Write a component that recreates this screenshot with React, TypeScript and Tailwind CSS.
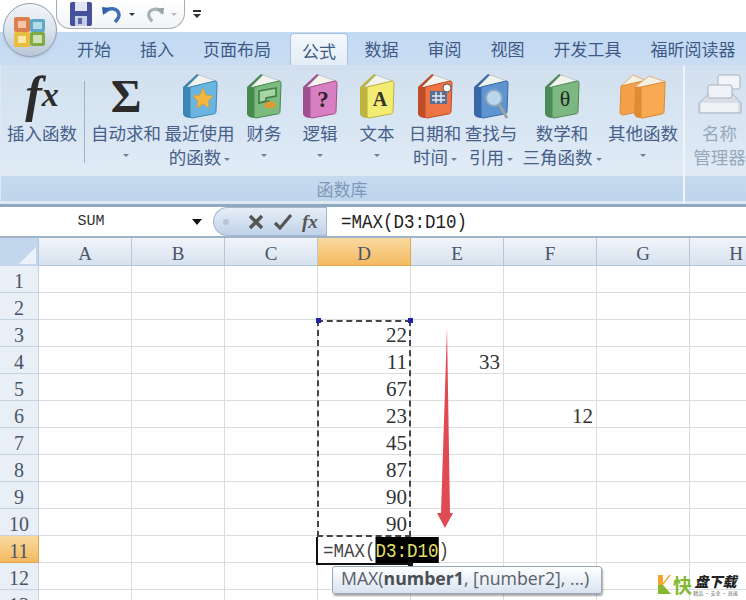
const cjk = '"Noto Sans CJK SC", "Noto Sans", sans-serif';
const serif = '"Liberation Serif", "Noto Serif CJK SC", serif';
const mono = '"Liberation Mono", monospace';

const tabs = ['开始', '插入', '页面布局', '公式', '数据', '审阅', '视图', '开发工具', '福昕阅读器'];
const cols = ['A', 'B', 'C', 'D', 'E', 'F', 'G', 'H'];
const rows = [1, 2, 3, 4, 5, 6, 7, 8, 9, 10, 11, 12, 13];
const values: Record<string, string> = {
  D3: '22', D4: '11', D5: '67', D6: '23', D7: '45', D8: '87', D9: '90', D10: '90', E4: '33', F6: '12',
};

function Book({ cover, spine, children }: { cover: string; spine: string; children?: React.ReactNode }) {
  return (
    <svg width="36" height="46" viewBox="0 0 36 46">
      <path d="M1 14 L15 1 L19 3 L8 14 Z" fill={spine} />
      <path d="M5 14 L17 2 L34 8 L9 14 Z" fill="#f3f3ee" stroke="#aab2b8" strokeWidth="0.6" />
      <path d="M1 14 L8 14 L9 45 C5 45 2 44 1 41 Z" fill={spine} />
      <path d="M8 14 L33 8 C35 8 35 9 35 11 L34 38 C34 40 33 41 31 41 L10 45 C9 45 8 44 8 43 Z" fill={cover} stroke={spine} strokeWidth="1" />
      {children}
    </svg>
  );
}

const icons = {
  star: (
    <Book cover="#6ab4e0" spine="#3c86b4">
      <path d="M21 15 L24 22 L31 23 L26 28 L27 35 L21 31 L15 35 L16 28 L11 23 L18 22 Z" fill="#f4b63f" stroke="#d9a030" strokeWidth="0.8" />
    </Book>
  ),
  money: (
    <Book cover="#7cba7e" spine="#468a50">
      <path d="M13 18 L30 15 V23 L20 25 V28 L13 30 Z" fill="#a9d4a4" stroke="#3f7d49" strokeWidth="1.6" />
      <path d="M13 30 L24 28" stroke="#3f7d49" strokeWidth="1.6" />
      <ellipse cx="24" cy="32" rx="6" ry="3.5" fill="#dd9a33" />
    </Book>
  ),
  logic: (
    <Book cover="#d77fc0" spine="#a0508f">
      <text x="21" y="34" fontSize="23" fontWeight="700" textAnchor="middle" fill="#2c2430" fontFamily={serif}>?</text>
    </Book>
  ),
  text: (
    <Book cover="#f3ec72" spine="#bcb43f">
      <text x="21" y="33" fontSize="20" fontWeight="700" textAnchor="middle" fill="#33332a" fontFamily={serif}>A</text>
    </Book>
  ),
  date: (
    <Book cover="#ee7446" spine="#bd4c28">
      <rect x="13" y="18" width="17" height="13" fill="#5b6f95" />
      <path d="M15 23 H28 M15 27 H28 M19 19 V30 M24 19 V30" stroke="#e8ecf3" strokeWidth="1.4" />
      <circle cx="30" cy="15" r="4" fill="#fff" stroke="#555" />
    </Book>
  ),
  lookup: (
    <Book cover="#5e94d2" spine="#3768a8">
      <circle cx="21" cy="25" r="8" fill="#b9d6ee" stroke="#8fa7bd" strokeWidth="2" />
      <path d="M26 31 L34 45" stroke="#98a2a8" strokeWidth="3" />
    </Book>
  ),
  math: (
    <Book cover="#7db883" spine="#4b8b57">
      <text x="21" y="33" fontSize="22" textAnchor="middle" fill="#1f2d23" fontFamily={serif}>θ</text>
    </Book>
  ),
};

const buttons: { w: number; lines: string[]; icon: React.ReactNode; arrowOnLine?: boolean }[] = [
  { w: 70, lines: ['自动求和'], icon: <span className="text-[47px] leading-[46px] font-bold text-[#2b2b2b]" style={{ fontFamily: serif }}>Σ</span> },
  { w: 77, lines: ['最近使用', '的函数'], icon: icons.star, arrowOnLine: true },
  { w: 52, lines: ['财务'], icon: icons.money },
  { w: 60, lines: ['逻辑'], icon: icons.logic },
  { w: 54, lines: ['文本'], icon: icons.text },
  { w: 62, lines: ['日期和', '时间'], icon: icons.date, arrowOnLine: true },
  { w: 50, lines: ['查找与', '引用'], icon: icons.lookup, arrowOnLine: true },
  { w: 92, lines: ['数学和', '三角函数'], icon: icons.math, arrowOnLine: true },
  {
    w: 70,
    lines: ['其他函数'],
    icon: (
      <svg width="48" height="46" viewBox="0 0 48 46">
        <path d="M2 13 L14 2 L28 8 L14 13 Z" fill="#f3f0e4" stroke="#e0a060" strokeWidth="0.8" />
        <path d="M2 13 L24 8 L24 38 L4 42 C2 42 1 41 1 39 Z" fill="#f3a04a" stroke="#d98a3a" />
        <path d="M16 14 L30 3 L47 9 L30 14 Z" fill="#f3f0e4" stroke="#e0a060" strokeWidth="0.8" />
        <path d="M16 14 L22 14 L22 45 C18 45 16 44 15 41 Z" fill="#e08a34" />
        <path d="M22 14 L45 9 C46 9 46 10 46 11 L45 39 C45 40 44 41 43 41 L24 45 L22 45 Z" fill="#f9a951" stroke="#d98a3a" />
      </svg>
    ),
  },
];

function Caret({ className = '' }: { className?: string }) {
  return <span className={`inline-block w-0 h-0 border-x-[3px] border-x-transparent border-t-[3px] border-t-[#6a7f9c] ${className}`} />;
}

function RibbonButton({ w, lines, icon, arrowOnLine }: { w: number; lines: string[]; icon: React.ReactNode; arrowOnLine?: boolean }) {
  return (
    <div className="shrink-0 flex flex-col items-center" style={{ width: w }}>
      <div className="h-[46px] flex items-end justify-center">{icon}</div>
      <div className="mt-[2px] text-[17.5px] leading-[24px] text-[#46608a] text-center whitespace-nowrap">
        <div>{lines[0]}</div>
        {arrowOnLine ? (
          <div className="h-[24px]">
            {lines[1]}
            <Caret className="ml-[3px] align-middle" />
          </div>
        ) : (
          <div className="h-[20px] flex items-center justify-center"><Caret /></div>
        )}
      </div>
    </div>
  );
}

function GroupLabelBar({ label }: { label: string }) {
  return (
    <div className="h-[25px] mb-[3px] bg-gradient-to-b from-[#c6daef] to-[#bed5ec] text-[17px] leading-[25px] text-center text-[#7f97b8]">
      {label}
    </div>
  );
}

export default function App() {
  return (
    <div className="relative w-[746px] h-[600px] overflow-hidden bg-white" style={{ fontFamily: cjk }}>
      {/* quick access toolbar */}
      <div className="h-[32px] flex items-start pl-[56px]">
        <div className="w-[129px] h-[29px] border border-t-0 border-[#a5abb3] rounded-br-[16px] rounded-bl-[14px] flex items-center gap-[9px] pl-[13px] bg-gradient-to-b from-white to-[#f1f3f6]">
          <svg width="22" height="24" viewBox="0 0 22 24">
            <rect x="0" y="0" width="22" height="24" rx="2" fill="#46509c" />
            <rect x="5" y="0" width="12" height="9" fill="#dfe5f2" />
            <rect x="5" y="14" width="12" height="10" fill="#c5cfe4" />
            <rect x="8" y="16" width="4" height="6" fill="#5665a8" />
          </svg>
          <svg width="22" height="20" viewBox="0 0 22 20">
            <path d="M3 9 C7 3 17 3 18 11 C18 14 16 16 14 18" fill="none" stroke="#3f6fb5" strokeWidth="3.5" />
            <path d="M1 3 L9 4 L2 11 Z" fill="#2f5ea8" />
          </svg>
          <Caret className="-ml-[3px] !border-t-[#333]" />
          <svg className="ml-[1px]" width="20" height="20" viewBox="0 0 22 20">
            <path d="M19 9 C15 3 5 3 4 11 C4 14 6 16 8 18" fill="none" stroke="#a7b1b6" strokeWidth="3.5" />
            <path d="M21 3 L13 4 L20 11 Z" fill="#99a5aa" />
          </svg>
          <Caret className="-ml-[3px] !border-t-[#b5b9bd]" />
        </div>
        <div className="ml-[8px] mt-[10px] w-[8px] flex flex-col gap-[2px] items-center">
          <span className="w-[8px] h-[2px] bg-[#333]" />
          <span className="w-0 h-0 border-x-[4px] border-x-transparent border-t-[4px] border-t-[#333]" />
        </div>
      </div>

      {/* tabs */}
      <div className="h-[33px] bg-gradient-to-b from-[#c3daf4] to-[#c9dcf2] flex pl-[62.5px] text-[17px] leading-[34px] text-[#3d5a86]">
        {tabs.map((t) =>
          t === '公式' ? (
            <div key={t} className="shrink-0 whitespace-nowrap h-[33px] mt-[1px] px-[11px] ml-[4.5px] mr-[2px] bg-gradient-to-b from-[#f4f8fc] to-[#e2ecf6] border border-b-0 border-[#a9c3df] rounded-t-[4px]">
              {t}
            </div>
          ) : (
            <div key={t} className="shrink-0 px-[14.5px] whitespace-nowrap">{t}</div>
          ),
        )}
      </div>

      {/* ribbon */}
      <div className="h-[142px] flex bg-[#dfe9f4] border-b-[3px] border-[#8fa9c1]">
        <div className="w-[683px] shrink-0 ml-[1px] border-r border-[#f0f5fa] rounded-[3px] flex flex-col">
          <div className="flex-1 flex pt-[8px] pl-[6px] bg-gradient-to-b from-[#d2dfee] via-[#d8e5f2] to-[#e0ebf6]">
            <div className="w-[70px] shrink-0 flex flex-col items-center">
              <div className="h-[46px] flex items-start justify-center italic font-bold text-[#2c2c2c]" style={{ fontFamily: serif }}>
                <span className="text-[50px] leading-[42px]">f</span>
                <span className="text-[34px] leading-[44px]">x</span>
              </div>
              <div className="mt-[2px] text-[17.5px] leading-[24px] text-[#46608a] whitespace-nowrap">插入函数</div>
            </div>
            <div className="w-[1px] h-[82px] mt-[8px] ml-[7px] mr-[6px] bg-[#9fb2c8]" />
            {buttons.map((b) => (
              <RibbonButton key={b.lines[0]} {...b} />
            ))}
          </div>
          <GroupLabelBar label="函数库" />
        </div>
        <div className="flex-1 flex flex-col rounded-[3px] border-l border-[#f0f5fa]">
          <div className="flex-1 flex flex-col items-center pt-[8px] pl-[8px] bg-gradient-to-b from-[#d2dfee] to-[#e0ebf6]">
            <svg width="44" height="46" viewBox="0 0 44 46">
              <path d="M1 30 L12 20 H34 L43 30 V40 H1 Z" fill="#d9dfe6" stroke="#a7b2bf" />
              <rect x="20" y="2" width="22" height="14" rx="2" fill="#f2f4f7" stroke="#a7b2bf" />
              <rect x="10" y="12" width="24" height="13" rx="2" fill="#eef1f5" stroke="#a7b2bf" />
              <rect x="3" y="30" width="37" height="9" fill="#f0f3f6" />
            </svg>
            <div className="mt-[2px] text-[17.5px] leading-[24px] text-[#98a8ba] text-center whitespace-nowrap">
              <div>名称</div>
              <div>管理器</div>
            </div>
          </div>
          <GroupLabelBar label="" />
        </div>
      </div>

      {/* formula bar */}
      <div className="h-[31px] flex border-b-2 border-[#9fb4c9] bg-white">
        <div className="w-[213px] shrink-0 flex items-center">
          <span className="w-[182px] text-center text-[15px] text-[#333] leading-[29px]" style={{ fontFamily: mono }}>SUM</span>
          <span className="ml-[10px] w-0 h-0 border-x-[5px] border-x-transparent border-t-[6px] border-t-[#111]" />
        </div>
        <div className="w-[113px] shrink-0 rounded-l-[15px] border border-r-0 border-[#a5b8cf] bg-gradient-to-b from-[#e6eef7] to-[#bfd2e8] flex items-center pl-[9px]">
          <span className="w-[6px] h-[6px] rounded-full bg-[#b9c6d6]" />
          <svg className="ml-[19px]" width="16" height="16" viewBox="0 0 16 16">
            <path d="M2 2 L14 14 M14 2 L2 14" stroke="#555" strokeWidth="3.4" />
          </svg>
          <svg className="ml-[9px]" width="20" height="18" viewBox="0 0 20 18">
            <path d="M2 10 L7 15 L18 2" fill="none" stroke="#555" strokeWidth="3.2" />
          </svg>
          <span className="ml-[9px] text-[19px] italic font-bold text-[#555] leading-none" style={{ fontFamily: serif }}>fx</span>
        </div>
        <div className="flex-1 border-l border-[#a5b8cf] pl-[14px] overflow-hidden">
          <div className="w-max origin-left scale-x-[0.833] text-[21px] leading-[31px] text-[#222]" style={{ fontFamily: mono }}>
            =MAX(D3:D10)
          </div>
        </div>
      </div>

      {/* sheet */}
      <div style={{ fontFamily: serif }}>
        <div className="flex h-[28px]">
          <div className="w-[39px] shrink-0 bg-[#c2d6ec] flex items-end justify-end p-[2px] border-r border-[#b4c6da]">
            <span className="w-0 h-0 border-l-[17px] border-l-transparent border-b-[17px] border-b-[#eaf1f9]" />
          </div>
          {cols.map((c) => (
            <div
              key={c}
              className={`w-[93px] shrink-0 text-center text-[19px] leading-[31px] text-[#4a5566] border-r border-b ${
                c === 'D'
                  ? 'bg-gradient-to-b from-[#f9da9f] to-[#f4b95f] border-[#dfa550]'
                  : 'bg-gradient-to-b from-[#f1f5fa] to-[#d7e2ef] border-[#b4c6da]'
              }`}
            >
              {c}
            </div>
          ))}
        </div>
        {rows.map((r) => (
          <div key={r} className="flex h-[27px]">
            <div
              className={`w-[39px] shrink-0 text-center text-[20px] leading-[30px] text-[#4a5566] border-r border-b ${
                r === 11 ? 'bg-gradient-to-b from-[#f9da9f] to-[#f4b95f] border-[#dfa550]' : 'bg-[#e8eff7] border-[#c4d2e2]'
              }`}
            >
              {r}
            </div>
            {cols.map((c) => (
              <div key={c} className="w-[93px] shrink-0 border-r border-b border-[#dadcdd] text-right pr-[3px] text-[21px] leading-[31px] text-[#333]">
                {values[`${c}${r}`]}
              </div>
            ))}
          </div>
        ))}
      </div>

      {/* office button */}
      <div className="absolute left-[3px] top-[3px] w-[54px] h-[54px] rounded-full bg-gradient-to-b from-[#f4f6f8] via-[#dbe3ec] to-[#b9c6d6] border border-[#8fa0b2] shadow-sm flex items-center justify-center">
        <svg className="mt-[3px]" width="34" height="32" viewBox="0 0 34 32">
          <rect x="1" y="1" width="16" height="15" rx="2" fill="#dc7f4e" />
          <rect x="5" y="5" width="8" height="7" fill="#f3c6a8" />
          <rect x="17" y="3" width="15" height="13" rx="2" fill="#5fa9c6" />
          <rect x="20" y="6" width="9" height="7" fill="#b6dbe8" />
          <rect x="1" y="16" width="16" height="15" rx="2" fill="#e9bb3e" />
          <rect x="5" y="20" width="8" height="7" fill="#f7e7a8" />
          <rect x="17" y="16" width="15" height="14" rx="2" fill="#7cab48" />
          <rect x="20" y="19" width="9" height="8" fill="#d0e2b4" />
        </svg>
      </div>

      {/* copy marquee round D3:D10 */}
      <div className="absolute left-[317px] top-[320px] w-[94px] h-[217px] border-2 border-dashed border-[#444]" />
      <span className="absolute left-[316px] top-[318px] w-[5px] h-[5px] bg-[#2222aa]" />
      <span className="absolute left-[408px] top-[318px] w-[5px] h-[5px] bg-[#2222aa]" />

      {/* arrow */}
      <svg className="absolute left-[430px] top-[325px]" width="30" height="206" viewBox="0 0 30 206">
        <path d="M17 3 L20 188 L23 188 L15 203 L7 188 L11 188 Z" fill="#e04a52" />
      </svg>

      {/* cell being edited */}
      <div className="absolute left-[316px] top-[537px] h-[28px] w-[95px] bg-white border-l-2 border-b-2 border-[#111] pl-[5px]">
        <div className="w-max origin-left scale-x-[0.833] text-[21px] leading-[30px] text-[#444] whitespace-pre" style={{ fontFamily: mono }}>
          =MAX(<span className="inline-block h-[26px] bg-black text-[#e6e26a]">D3:D10</span>)
        </div>
        <span className="absolute -right-[2px] -bottom-[3px] w-[5px] h-[5px] bg-[#111]" />
      </div>

      {/* function tooltip */}
      <div className="absolute left-[332px] top-[566px] w-[270px] h-[28px] rounded-[3px] border border-[#9aa6b4] bg-gradient-to-b from-white to-[#d9e3f0] shadow-[1px_2px_2px_rgba(0,0,0,0.35)] pl-[8px] text-[17.7px] leading-[23px] text-[#5a6068] whitespace-nowrap" style={{ fontFamily: '"Open Sans", sans-serif' }}>
        MAX(<b className="text-[#4a4f56]">number1</b>, [number2], ...)
      </div>

      {/* watermark */}
      <div className="absolute left-[658px] top-[573px] flex items-center">
        <svg width="13" height="19" viewBox="0 0 13 19">
          <path d="M0 0 H5 V8 L11 0 H13 L5 10 L0 10 Z" fill="#f4a52e" />
          <path d="M0 10 H5 L13 19 H0 Z" fill="#86b82f" />
        </svg>
        <span className="ml-[2px] text-[19px] leading-[20px] font-bold text-[#86b82f]">快</span>
        <div className="ml-[2px] w-[43px] flex flex-col items-center">
          <span className="text-[14px] font-black text-[#222] leading-[16px] italic whitespace-nowrap">盘下载</span>
          <span className="mt-[1px] text-[5px] text-[#666] leading-[6px] whitespace-nowrap">精品 · 安全 · 高速</span>
        </div>
      </div>
    </div>
  );
}
